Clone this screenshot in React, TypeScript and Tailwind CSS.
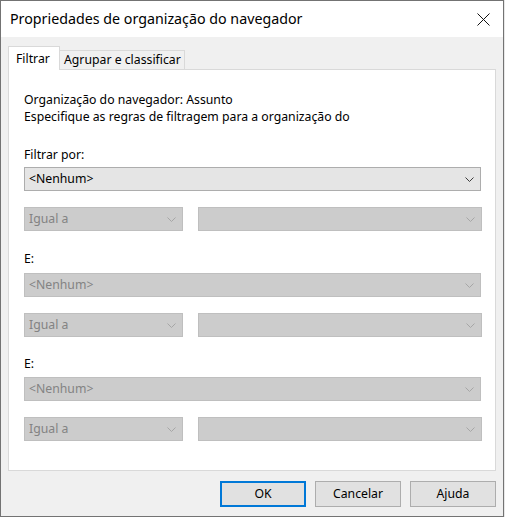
import React from 'react';

const font = { fontFamily: '"Segoe UI", "Noto Sans", Arial, sans-serif' };

function Chevron({ disabled }: { disabled?: boolean }) {
  return (
    <svg width="9" height="5" viewBox="0 0 9 5" className="shrink-0">
      <polyline
        points="0.5,0.5 4.5,4.5 8.5,0.5"
        fill="none"
        stroke={disabled ? '#a6a6a6' : '#3c3c3c'}
        strokeWidth="1"
      />
    </svg>
  );
}

function Combo({ text, disabled, className }: { text?: string; disabled?: boolean; className: string }) {
  return (
    <div
      className={
        'h-[24px] flex items-center justify-between pl-[4px] pr-[6px] border text-[12.25px] ' +
        (disabled
          ? 'bg-[#cccccc] border-[#bfbfbf] text-[#838383] '
          : 'bg-[#e5e5e5] border-[#adadad] text-black ') +
        className
      }
    >
      <span>{text}</span>
      <Chevron disabled={disabled} />
    </div>
  );
}

function ConditionRow() {
  return (
    <div className="flex gap-[15px]">
      <Combo text="Igual a" disabled className="w-[159px]" />
      <Combo disabled className="w-[284px]" />
    </div>
  );
}

function Button({ label, primary }: { label: string; primary?: boolean }) {
  return (
    <div
      className={
        'w-[86px] h-[26px] flex items-center justify-center bg-[#e1e1e1] text-[12.25px] text-black ' +
        (primary ? 'border-2 border-[#0078d7]' : 'border border-[#adadad]')
      }
    >
      {label}
    </div>
  );
}

export default function App() {
  return (
    <div className="w-[505px] h-[517px] bg-[#e8e8e8]" style={font}>
      <div className="w-[504px] h-[517px] border border-[#737373] bg-[#f0f0f0] flex flex-col">
        {/* title bar */}
        <div className="h-[36px] bg-white flex items-center justify-between pl-[9px] pr-[13px]">
          <span className="text-[14.25px] text-black leading-none pt-[1px]">
            Propriedades de organização do navegador
          </span>
          <svg width="13" height="13" viewBox="0 0 13 13">
            <path d="M0.5 0.5 L12.5 12.5 M12.5 0.5 L0.5 12.5" stroke="#111" strokeWidth="1" />
          </svg>
        </div>

        <div className="px-[7px] pt-[9px]">
          {/* tabs */}
          <div className="flex items-end h-[23px] relative z-10">
            <div className="w-[52px] h-[24px] -mb-px bg-white border-t border-x border-[#d9d9d9] pl-[7px] pt-[3px] text-[12.25px] text-black">
              Filtrar
            </div>
            <div className="w-[125px] h-[19px] border-t border-r border-[#d9d9d9] pl-[4px] text-[12.25px] text-black leading-[18px]">
              Agrupar e classificar
            </div>
          </div>

          {/* tab page */}
          <div className="w-[488px] h-[402px] bg-white border border-[#d9d9d9] pl-[15px] pt-[21px] text-[12.25px] text-black">
            <div className="leading-[17px]">
              <div>Organização do navegador: Assunto</div>
              <div>Especifique as regras de filtragem para a organização do</div>
            </div>

            <div className="mt-[21px] leading-[17px]">Filtrar por:</div>
            <Combo text="<Nenhum>" className="w-[457px] mt-[4px]" />
            <div className="mt-[16px]">
              <ConditionRow />
            </div>

            <div className="mt-[19px] leading-[17px]">E:</div>
            <Combo text="<Nenhum>" disabled className="w-[457px] mt-[6px]" />
            <div className="mt-[16px]">
              <ConditionRow />
            </div>

            <div className="mt-[18px] leading-[17px]">E:</div>
            <Combo text="<Nenhum>" disabled className="w-[457px] mt-[5px]" />
            <div className="mt-[16px]">
              <ConditionRow />
            </div>
          </div>

          {/* dialog buttons */}
          <div className="flex justify-end gap-[9px] pt-[10px]">
            <Button label="OK" primary />
            <Button label="Cancelar" />
            <Button label="Ajuda" />
          </div>
        </div>
      </div>
    </div>
  );
}
